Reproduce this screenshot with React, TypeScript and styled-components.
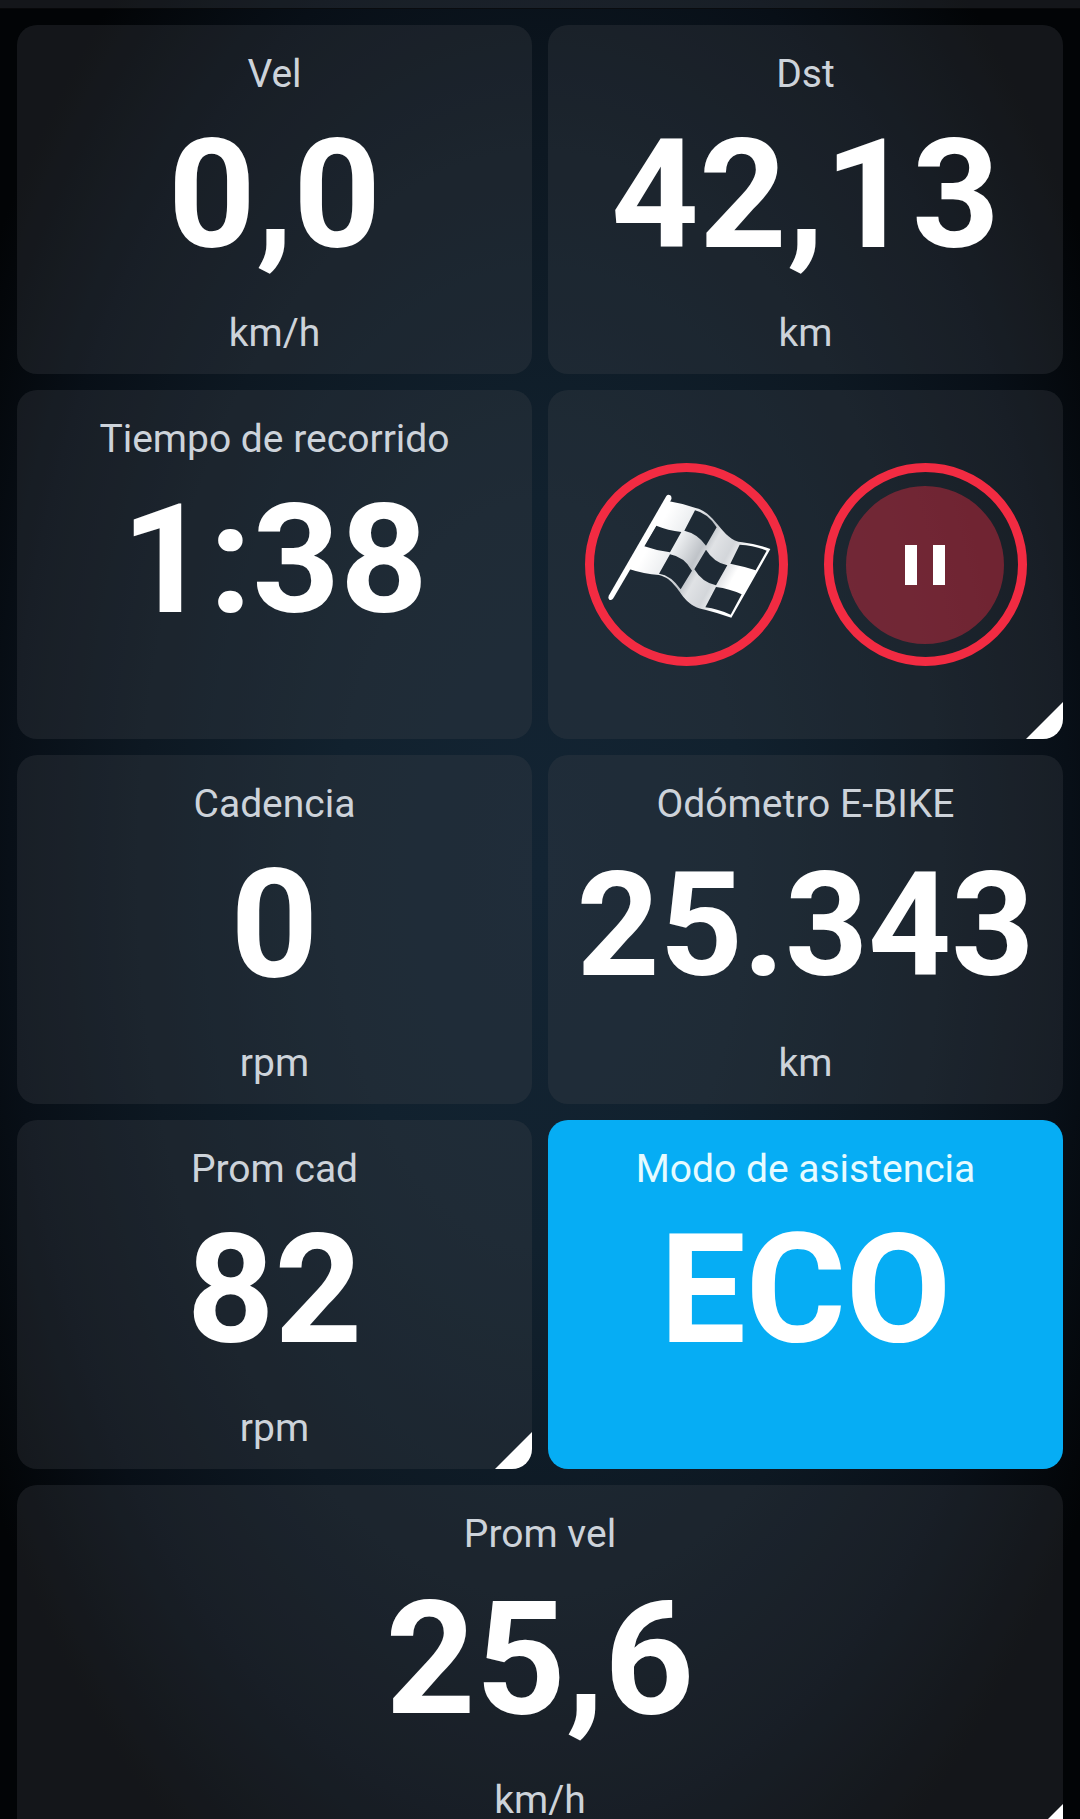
import React from "react";
import styled, { createGlobalStyle, css } from "styled-components";

const GlobalStyle = createGlobalStyle`
  *, *::before, *::after { box-sizing: border-box; }
  body {
    margin: 0;
    background: #030507;
    font-family: Roboto, "Noto Sans", sans-serif;
  }
`;

const Screen = styled.main`
  height: 100vh;
  overflow: hidden;
  background: radial-gradient(
    ellipse 60% 64% at 50% 48%,
    #132433 0%,
    #11212e 32%,
    #0d1822 62%,
    #080f17 82%,
    #020406 100%
  );
`;

const TopStrip = styled.div`
  height: 9px;
  background: rgba(64, 68, 76, 0.29);
  border-bottom: 1px solid rgba(0, 0, 0, 0.6);
`;

const Grid = styled.div`
  display: grid;
  grid-template-columns: 1fr 1fr;
  grid-template-rows: repeat(4, 349px) 356px;
  gap: 16px;
  padding: 16px 17px;
`;

const Tile = styled.section<{ $active?: boolean; $wide?: boolean; $corner?: boolean }>`
  position: relative;
  display: flex;
  flex-direction: column;
  align-items: center;
  min-width: 0;
  padding: 30px 16px 21px;
  border-radius: 20px;
  overflow: hidden;
  color: ${(p) => (p.$active ? "#e6fbff" : "#cdd3da")};
  background: ${(p) => (p.$active ? "#06adf4" : "rgba(64, 68, 76, 0.29)")};
  ${(p) => p.$wide && css`grid-column: 1 / -1;`}
  ${(p) =>
    p.$corner &&
    css`
      &::after {
        content: "";
        position: absolute;
        right: 0;
        bottom: 0;
        width: 37px;
        height: 37px;
        background: #fff;
        clip-path: polygon(100% 0, 100% 100%, 0 100%);
      }
    `}
`;

const ControlsTile = styled(Tile)`
  justify-content: center;
  padding: 0 16px;
`;

const Label = styled.h2`
  margin: 0;
  font-size: 39px;
  line-height: 39px;
  font-weight: 400;
  white-space: nowrap;
`;

const Value = styled.p<{ $size: number }>`
  flex: 1;
  display: flex;
  align-items: center;
  margin: 0;
  padding-bottom: 18px;
  color: #fff;
  font-size: ${(p) => p.$size}px;
  line-height: 180px;
  font-weight: 700;
  white-space: nowrap;
`;

const Unit = styled.p`
  margin: 0;
  min-height: 39px;
  font-size: 39px;
  line-height: 39px;
`;

const Controls = styled.div`
  display: flex;
  align-items: center;
  gap: 36px;
`;

const RoundButton = styled.button`
  display: flex;
  align-items: center;
  justify-content: center;
  width: 203px;
  height: 203px;
  padding: 0;
  border: 9px solid #f22b42;
  border-radius: 50%;
  background: transparent;
  cursor: pointer;
`;

const PauseDisc = styled.span`
  display: flex;
  align-items: center;
  justify-content: center;
  gap: 16px;
  width: 158px;
  height: 158px;
  border-radius: 50%;
  background: rgba(242, 43, 66, 0.4);
`;

const PauseBar = styled.span`
  width: 12px;
  height: 40px;
  background: #fff;
`;

const FlagSvg = styled.svg`
  display: block;
  width: 185px;
  height: 185px;
  flex: none;
`;

const FlagIcon = () => (
  <FlagSvg viewBox="100 96 555 555" aria-hidden="true">
    <defs>
      <linearGradient id="cloth" gradientUnits="userSpaceOnUse" x1="250" y1="270" x2="560" y2="440">
        <stop offset="0.1" stopColor="#ffffff" />
        <stop offset="0.3" stopColor="#eceef0" />
        <stop offset="0.5" stopColor="#bfc3c8" />
        <stop offset="0.58" stopColor="#e0e2e5" />
        <stop offset="0.72" stopColor="#d3d6da" />
        <stop offset="0.86" stopColor="#ffffff" />
      </linearGradient>
    </defs>
    <path
      fill="url(#cloth)"
      fillRule="evenodd"
      d="M322 183 Q365 190 405 204 C440 212 462 244 474 257 C494 281 512 303 545 307 Q585 311 629 327 L512 533 Q470 518 433 509 C380 500 366 465 346 441 C330 421 316 410 295 405 Q250 402 205 387 Z
      M403 211 Q442 220 468 262 L436 317 Q411 281 371 272 Z
      M287 257 Q322 271 362 276 L328 337 Q290 333 251 319 Z
      M328 343 Q371 351 394 392 L360 448 Q331 406 295 401 Z
      M436 329 Q459 367 500 376 L466 436 Q425 428 401 388 Z
      M537 314 Q580 316 618 332 L585 391 Q550 379 509 371 Z
      M466 441 Q507 446 543 463 L510 524 Q472 507 434 502 Z"
    />
    <path
      fill="#ffffff"
      d="M317 168 Q322 162 329 166 Q335 172 331 180 L158 475 Q153 483 146 479 Q141 474 145 466 Z"
    />
  </FlagSvg>
);

type Metric = {
  label: string;
  value: string;
  unit?: string;
  size?: number;
  active?: boolean;
  wide?: boolean;
  corner?: boolean;
};

const MetricTile = ({ label, value, unit, size = 153, active, wide, corner }: Metric) => (
  <Tile $active={active} $wide={wide} $corner={corner}>
    <Label>{label}</Label>
    <Value $size={size}>{value}</Value>
    <Unit>{unit}</Unit>
  </Tile>
);

export default function App() {
  return (
    <>
      <GlobalStyle />
      <Screen>
        <TopStrip />
        <Grid>
          <MetricTile label="Vel" value="0,0" unit="km/h" />
          <MetricTile label="Dst" value="42,13" unit="km" />
          <MetricTile label="Tiempo de recorrido" value="1:38" />
          <ControlsTile $corner>
            <Controls>
              <RoundButton type="button" aria-label="Finalizar">
                <FlagIcon />
              </RoundButton>
              <RoundButton type="button" aria-label="Pausa">
                <PauseDisc>
                  <PauseBar />
                  <PauseBar />
                </PauseDisc>
              </RoundButton>
            </Controls>
          </ControlsTile>
          <MetricTile label="Cadencia" value="0" unit="rpm" />
          <MetricTile label="Odómetro E-BIKE" value="25.343" unit="km" size={145} />
          <MetricTile label="Prom cad" value="82" unit="rpm" corner />
          <MetricTile label="Modo de asistencia" value="ECO" active />
          <MetricTile label="Prom vel" value="25,6" unit="km/h" size={157} wide corner />
        </Grid>
      </Screen>
    </>
  );
}
